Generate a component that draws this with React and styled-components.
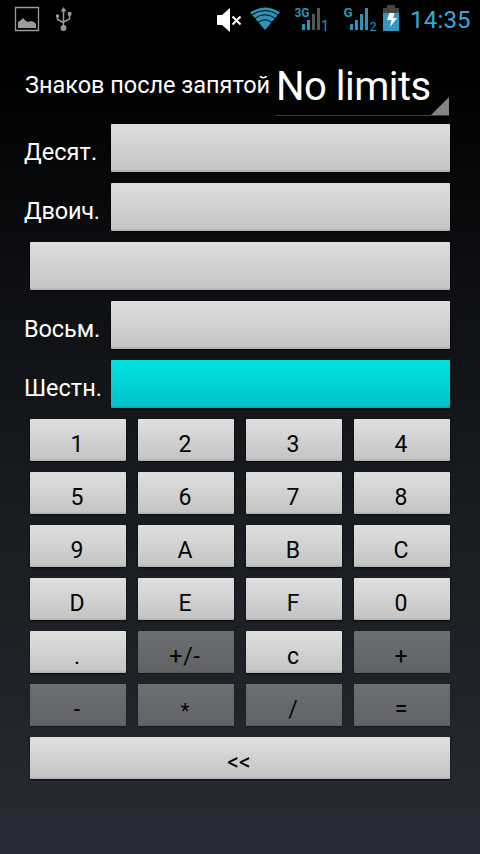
import React from "react";
import styled, { createGlobalStyle } from "styled-components";

const Global = createGlobalStyle`
  * { box-sizing: border-box; }
  body { margin: 0; background: #000; }
`;

const Screen = styled.div`
  width: 480px;
  height: 854px;
  overflow: hidden;
  color: #fff;
  font-family: Roboto, "Noto Sans", sans-serif;
  background: linear-gradient(#000 0, #000 70px, #0e1013 300px, #181b1f 500px, #20242a 700px, #282b35 854px);
`;

const StatusBar = styled.header`
  display: flex;
  align-items: center;
  height: 38px;
  background: #000;
`;

const StatusIcons = styled.svg`
  display: block;
  flex: none;
`;

const SmallText = styled.text`
  font: ${(p) => p.$weight || 400} ${(p) => p.$size}px Roboto, sans-serif;
  fill: #2f93b5;
`;

const Clock = styled.time`
  font-size: 24px;
  line-height: 38px;
  letter-spacing: 0.2px;
  color: #35acd6;
  white-space: nowrap;
  padding-top: 2px;
`;

const Content = styled.main`
  padding: 26px 30px 0 24px;
`;

const PrecisionRow = styled.div`
  display: flex;
  height: 60px;
`;

const PrecisionLabel = styled.label`
  width: 252px;
  padding-left: 1px;
  font-size: 23.5px;
  line-height: 43px;
  letter-spacing: -0.02px;
  white-space: nowrap;
`;

const Spinner = styled.div`
  display: flex;
  position: relative;
  width: 173px;
  height: 52px;
  border-bottom: 1px solid #3b3b3c;
  font-size: 40px;
  line-height: 45px;
  letter-spacing: -0.5px;
  white-space: nowrap;
`;

const Corner = styled.svg`
  position: absolute;
  right: 0;
  bottom: 0;
`;

const FieldRow = styled.div`
  display: flex;
  height: 48px;
  margin-bottom: 11px;
`;

const FieldLabel = styled.label`
  width: 87px;
  flex: none;
  font-size: 23.5px;
  line-height: 56px;
  letter-spacing: ${(p) => p.$spacing || 0}px;
  white-space: nowrap;
`;

const Field = styled.div`
  flex: 1;
  margin-left: ${(p) => (p.$wide ? 6 : 0)}px;
  border-radius: 1px;
  background: ${(p) =>
    p.$active
      ? "linear-gradient(#00e0e0, #00c6ca 94%, #00abb0)"
      : "linear-gradient(#dedede, #c5c5c5 94%, #acacac)"};
  box-shadow: 0 1px 2px rgba(0, 0, 0, 0.7);
`;

const Keypad = styled.div`
  display: grid;
  grid-template-columns: repeat(4, 96px);
  grid-auto-rows: 42px;
  gap: 11px 12px;
  margin-left: 6px;
`;

const Key = styled.button`
  display: flex;
  justify-content: center;
  grid-column: span ${(p) => p.$span || 1};
  height: 42px;
  border: 0;
  border-radius: 1px;
  padding: 0 2px 0 0;
  color: #050505;
  font: 400 ${(p) => p.$size || 23}px/${(p) => p.$line || 52}px Roboto, "Noto Sans", sans-serif;
  letter-spacing: ${(p) => p.$spacing || 0}px;
  background: linear-gradient(#dfdfdf, #c5c5c5 94%, #adadad);
  box-shadow: 0 1px 2px rgba(0, 0, 0, 0.7);

  &:disabled {
    background: linear-gradient(#6c6f72, #616366 95%, #56585b);
    box-shadow: 0 1px 2px rgba(0, 0, 0, 0.3);
  }
`;

const fields = [
  { label: "Десят.", spacing: 0.05 },
  { label: "Двоич.", spacing: -0.2 },
  { label: null },
  { label: "Восьм.", spacing: -0.1 },
  { label: "Шестн.", spacing: 0, active: true },
];

const keys = [
  "1", "2", "3", "4", "5", "6", "7", "8", "9", "A", "B", "C",
  "D", "E", "F", "0", ".", "+/-", "c", "+", "-", "*", "/", "=",
];
const disabledKeys = new Set(["+/-", "+", "-", "*", "/", "="]);
const keyTweaks = {
  "+/-": { $spacing: 0.8 },
  "*": { $size: 20, $line: 54 },
};

function Status() {
  return (
    <StatusBar>
      <StatusIcons width="410" height="38" viewBox="0 0 410 38">
        <path d="M15.500 7.500h23v23h-23z" fill="none" stroke="#9b9b9b" strokeWidth="1.300" />
        <path d="M18 28v-6l3-2 2-2 3 3 2 1 3-1 3 1 2 2v4z" fill="#9b9b9b" />
        <g fill="none" stroke="#999" strokeWidth="1.500">
          <path d="M63.500 28V9M57.500 16v3.500l6 3M69.500 14v5l-6 3" />
        </g>
        <g fill="#999">
          <path d="M60.500 11.500l3-4.500 3 4.500z" />
          <circle cx="63.500" cy="28" r="2.900" />
          <circle cx="57.500" cy="16" r="1.800" />
          <path d="M67.800 12h3.600v3.600h-3.600z" />
        </g>

        <path d="M217 15h5l8-7v24l-8-7h-5z" fill="#fff" />
        <path d="M232.500 16.500l8 8m0-8l-8 8" stroke="#fff" strokeWidth="2" />

        <path d="M250 12.500Q265 2.500 280 12.500L265 30z" fill="#2e93b9" />
        <g fill="none" stroke="#000" strokeWidth="1">
          <path d="M251.500 15Q265 6 278.500 15M254.500 18.500Q265 11 275.500 18.500M258 22.500Q265 17 272 22.500" />
        </g>

        <SmallText x="294.500" y="17" $size={13.5} $weight={700} textLength="15" lengthAdjust="spacingAndGlyphs">3G</SmallText>
        <path d="M302 24h3v6h-3zM307 20h3v10h-3z" fill="#2e93b9" />
        <path d="M312 14h3v16h-3zM317 8h3v22h-3z" fill="#555" />
        <SmallText x="321" y="31" $size={14}>1</SmallText>

        <SmallText x="343.500" y="17" $size={13.5} $weight={700}>G</SmallText>
        <path d="M350 24h3v6h-3zM355 20h3v10h-3zM360 14h3v16h-3zM365 8h3v22h-3z" fill="#2e93b9" />
        <SmallText x="369.500" y="31" $size={13.5} textLength="7" lengthAdjust="spacingAndGlyphs">2</SmallText>

        <path d="M387 5h8v3h4v5h-16V8h4z" fill="#484443" />
        <path d="M383 13h16v18h-16z" fill="#3498bd" />
        <path d="M389.500 13h5l-1.500 5h4l-7 9 1.500-7h-4.500z" fill="#fff" />
      </StatusIcons>
      <Clock>14:35</Clock>
    </StatusBar>
  );
}

export default function App() {
  return (
    <Screen>
      <Global />
      <Status />
      <Content>
        <PrecisionRow>
          <PrecisionLabel>Знаков после запятой</PrecisionLabel>
          <Spinner>
            No limits
            <Corner width="18" height="18" viewBox="0 0 18 18">
              <path d="M18 0v18H0z" fill="#858585" />
            </Corner>
          </Spinner>
        </PrecisionRow>
        {fields.map((f, i) => (
          <FieldRow key={i}>
            {f.label && <FieldLabel $spacing={f.spacing}>{f.label}</FieldLabel>}
            <Field $wide={!f.label} $active={f.active} />
          </FieldRow>
        ))}
        <Keypad>
          {keys.map((k) => (
            <Key key={k} disabled={disabledKeys.has(k)} {...keyTweaks[k]}>{k}</Key>
          ))}
          <Key $span={4}>&lt;&lt;</Key>
        </Keypad>
      </Content>
    </Screen>
  );
}
